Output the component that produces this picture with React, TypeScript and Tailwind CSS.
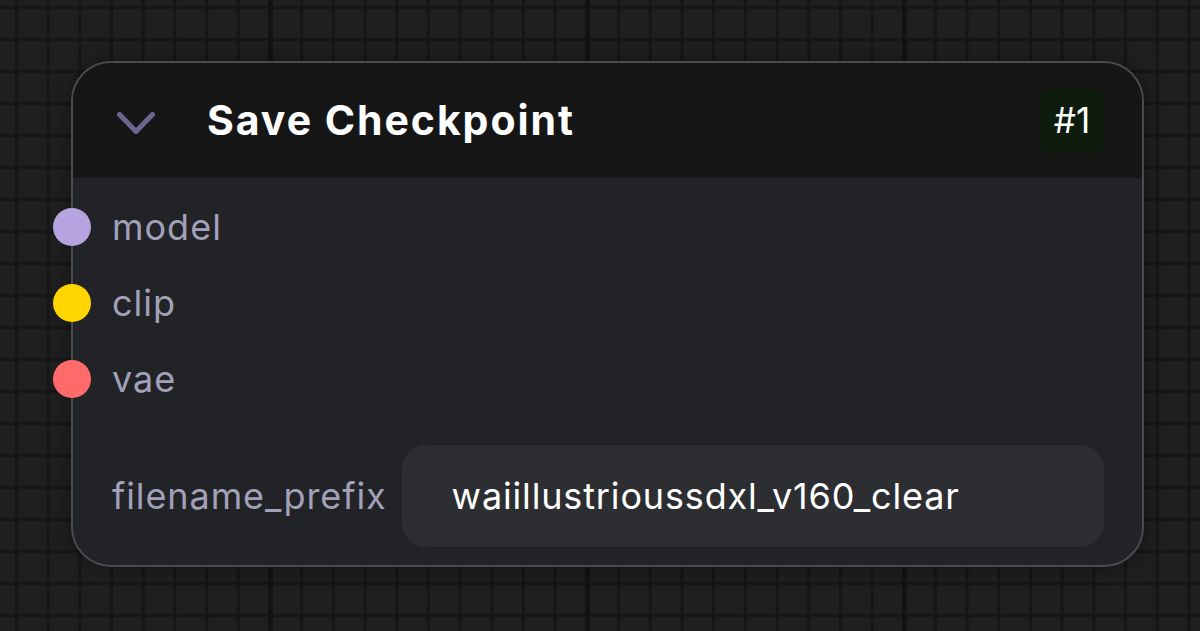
const inputs = [
  { name: 'model', color: 'bg-[#b7a3e0]' },
  { name: 'clip', color: 'bg-[#ffd500]' },
  { name: 'vae', color: 'bg-[#ff6b6b]' },
];

export default function App() {
  return (
    <div className="h-[631px] w-full overflow-hidden bg-[#1f1f1f] bg-[linear-gradient(to_right,#131313_5px,transparent_5px),linear-gradient(to_right,#161616_3px,transparent_3px),linear-gradient(to_bottom,#161616_3px,transparent_3px)] bg-[size:317px_32px,31.7px_32px,31.7px_32px] bg-[position:268px_0px,15px_6px,15px_6px] pl-[71px] pt-[61px] font-['Inter','Liberation_Sans',sans-serif]">
      <div className="relative w-[1073px] rounded-[40px] border-2 border-[#4b4b4d] bg-[#222326] shadow-[0_0_20px_rgba(0,0,0,0.4)]">
        <div className="flex h-[115px] items-center rounded-t-[38px] bg-[#161616] pl-[44px] pr-[38px]">
          <svg width="38" height="22" viewBox="0 0 38 22" fill="none" className="mt-[4px] shrink-0">
            <polyline
              points="2.5,2.5 19,19.5 35.5,2.5"
              stroke="#6a6690"
              strokeWidth="5"
              strokeLinecap="round"
              strokeLinejoin="round"
            />
          </svg>
          <h1 className="ml-[52px] flex-1 text-[41px] font-bold tracking-[1.95px] text-white">
            Save Checkpoint
          </h1>
          <div className="flex h-[64px] w-[64px] items-center justify-center rounded-[10px] bg-[#0e1c0e] text-[35px] text-white">
            #1
          </div>
        </div>

        <div className="pb-[18px] pt-[11px]">
          {inputs.map((input) => (
            <div key={input.name} className="relative flex h-[76px] items-center pl-[39px]">
              <span
                className={`absolute left-[-20px] top-1/2 h-[38px] w-[38px] -translate-y-1/2 rounded-full ${input.color}`}
              />
              <span className="text-[36px] tracking-[1px] text-[#a3a0b9]">{input.name}</span>
            </div>
          ))}

          <div className="mt-[28px] flex items-center pl-[39px] pr-[38px]">
            <span className="text-[36px] tracking-[0.9px] text-[#a3a0b9]">filename_prefix</span>
            <div className="ml-[15px] flex h-[102px] flex-1 items-center rounded-[24px] bg-[#2d2e31] pl-[50px] text-[36px] tracking-[0.85px] text-white">
              waiillustrioussdxl_v160_clear
            </div>
          </div>
        </div>
      </div>
    </div>
  );
}
